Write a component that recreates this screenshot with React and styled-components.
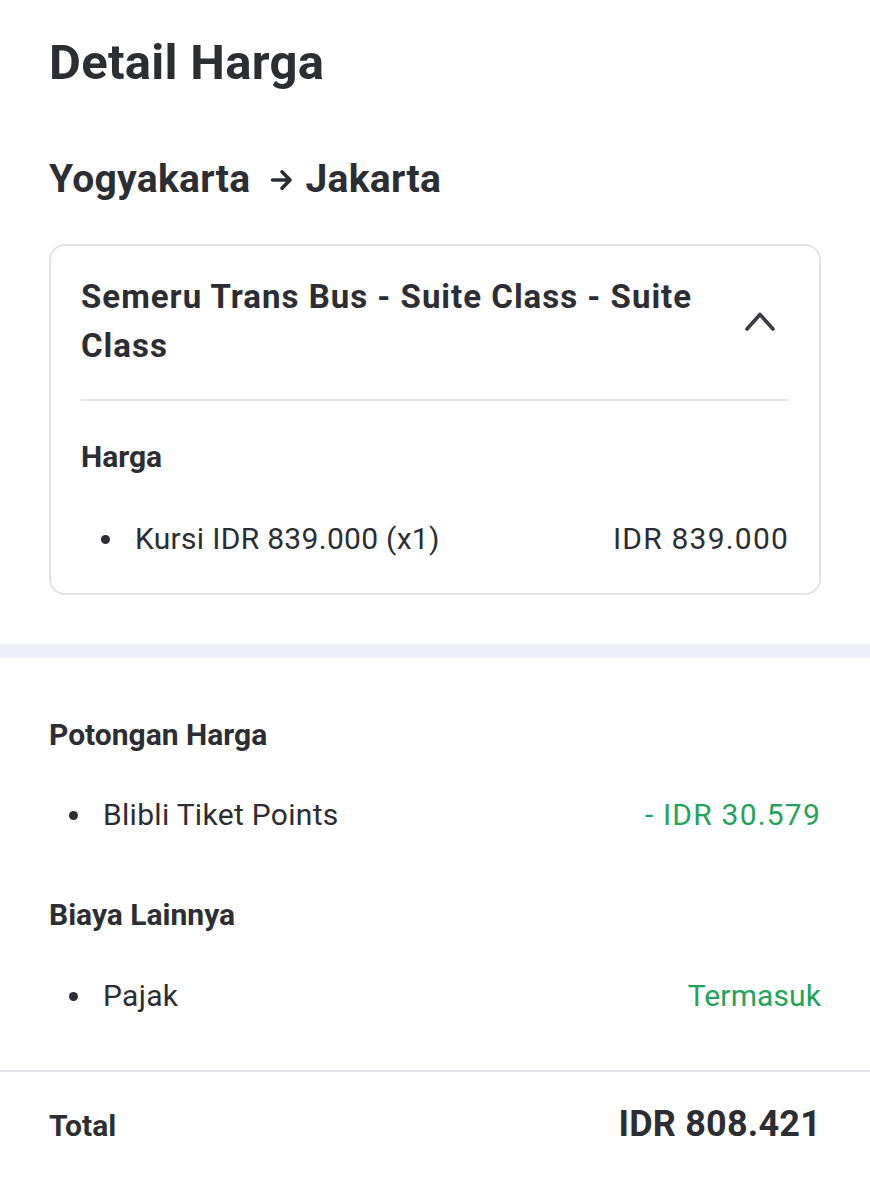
import React from 'react';
import styled, { createGlobalStyle } from 'styled-components';

const GlobalStyle = createGlobalStyle`
  body {
    margin: 0;
    background: #ffffff;
    font-family: Roboto, 'Liberation Sans', sans-serif;
    color: #2c2e33;
  }
`;

const Page = styled.main`
  width: 870px;
  min-height: 1199px;
  background: #fff;
`;

const Top = styled.section`
  padding: 33px 49px 49px;
`;

const Title = styled.h1`
  margin: 0;
  font-size: 49px;
  line-height: 60px;
  font-weight: 700;
  letter-spacing: 0.3px;
`;

const Route = styled.h2`
  margin: 62px 0 0;
  display: flex;
  align-items: center;
  font-size: 39px;
  line-height: 48px;
  font-weight: 700;
  letter-spacing: 0.3px;
`;

const Arrow = styled.svg`
  width: 23px;
  height: 22px;
  margin: 2px 12px 0 20px;
`;

const Card = styled.div`
  margin-top: 41px;
  border: 2px solid #e2e4ea;
  border-radius: 16px;
  padding: 26px 30px 36px;
`;

const CardHead = styled.div`
  display: flex;
  align-items: center;
  justify-content: space-between;
  padding-bottom: 29px;
  border-bottom: 2px solid #e2e4ea;
`;

const CardTitle = styled.div`
  font-size: 33px;
  line-height: 49px;
  font-weight: 700;
  letter-spacing: 1px;
  max-width: 640px;
`;

const Chevron = styled.svg`
  width: 32px;
  height: 32px;
  margin-right: 13px;
  flex-shrink: 0;
`;

const Label = styled.div`
  font-size: 30px;
  line-height: 36px;
  font-weight: 700;
  margin-top: ${(p) => p.$top || 0}px;
`;

const Row = styled.div`
  display: flex;
  align-items: center;
  justify-content: space-between;
  margin-top: ${(p) => p.$top || 0}px;
  font-size: 30px;
  line-height: 36px;
  letter-spacing: 0.3px;
`;

const Item = styled.span`
  display: flex;
  align-items: center;
  padding-left: 20px;
  &::before {
    content: '';
    width: 9px;
    height: 9px;
    border-radius: 50%;
    background: #2c2e33;
    margin-right: 25px;
  }
`;

const Amount = styled.span`
  color: ${(p) => (p.$green ? '#22a45b' : '#2c2e33')};
  letter-spacing: ${(p) => (p.$num ? '1.2px' : '0.1px')};
`;

const Band = styled.div`
  height: 14px;
  background: #eceef5;
`;

const Bottom = styled.section`
  padding: 59px 49px 56px;
`;

const TotalBar = styled.div`
  border-top: 2px solid #dfe1ea;
  padding: 30px 49px;
  display: flex;
  align-items: baseline;
  justify-content: space-between;
  line-height: 44px;
`;

const TotalLabel = styled.span`
  font-size: 30px;
  font-weight: 700;
`;

const TotalValue = styled.span`
  font-size: 36px;
  font-weight: 700;
  letter-spacing: 0.2px;
`;

export default function App() {
  return (
    <Page>
      <GlobalStyle />
      <Top>
        <Title>Detail Harga</Title>
        <Route>
          Yogyakarta
          <Arrow viewBox="0 0 23 22" fill="none" stroke="#2c2e33" strokeWidth="3.6" strokeLinecap="round" strokeLinejoin="round">
            <path d="M2.5 11 H20 M12 2.8 L20 11 L12 19.2" />
          </Arrow>
          Jakarta
        </Route>
        <Card>
          <CardHead>
            <CardTitle>Semeru Trans Bus - Suite Class - Suite Class</CardTitle>
            <Chevron viewBox="0 0 32 32" fill="none" stroke="#3a3c42" strokeWidth="3.6" strokeLinecap="round" strokeLinejoin="round">
              <path d="M3 24 L16 9.5 L29 24" />
            </Chevron>
          </CardHead>
          <Label $top={38}>Harga</Label>
          <Row $top={46}>
            <Item>Kursi IDR 839.000 (x1)</Item>
            <Amount $num>IDR 839.000</Amount>
          </Row>
        </Card>
      </Top>
      <Band />
      <Bottom>
        <Label>Potongan Harga</Label>
        <Row $top={44}>
          <Item>Blibli Tiket Points</Item>
          <Amount $green $num>- IDR 30.579</Amount>
        </Row>
        <Label $top={64}>Biaya Lainnya</Label>
        <Row $top={45}>
          <Item>Pajak</Item>
          <Amount $green>Termasuk</Amount>
        </Row>
      </Bottom>
      <TotalBar>
        <TotalLabel>Total</TotalLabel>
        <TotalValue>IDR 808.421</TotalValue>
      </TotalBar>
    </Page>
  );
}
